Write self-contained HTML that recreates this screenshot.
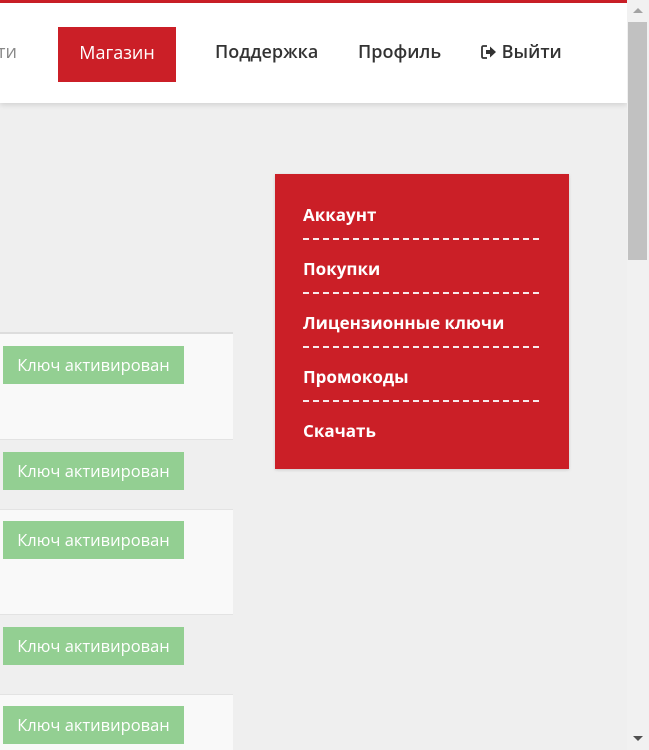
<!DOCTYPE html>
<html><head><meta charset="utf-8"><style>
*{margin:0;padding:0;box-sizing:border-box}
body{width:649px;height:750px;overflow:hidden;background:#efefef;font-family:"Open Sans","Liberation Sans","DejaVu Sans",sans-serif;position:relative}
.topbar{position:absolute;left:0;top:0;width:627px;height:3px;background:#cb1f27}
.header{position:absolute;left:0;top:3px;width:627px;height:100px;background:#fff;box-shadow:0 2px 5px rgba(0,0,0,.12)}
.nav{position:absolute;top:40px;font-size:18px;font-weight:600;color:#333;white-space:nowrap}
.shop{position:absolute;left:58px;top:27px;width:118px;height:55px;background:#cb1f27;color:#fff;font-size:18px;text-align:center;line-height:53px}
.menu{position:absolute;left:275px;top:174px;width:294px;height:295px;background:#cb1f27;box-shadow:0 1px 3px rgba(0,0,0,.15)}
.mi{position:absolute;left:28px;color:#fff;font-size:17px;font-weight:bold}
.dash{position:absolute;left:28px;width:240px;height:2px;background:repeating-linear-gradient(90deg,rgba(255,255,255,.9) 0 6px,transparent 6px 10px)}
.row{position:absolute;left:0;width:233px}
.btn{position:absolute;left:3px;width:181px;height:38px;background:#93cf92;color:#fff;font-size:16.5px;text-align:center;line-height:37px}
.sb{position:absolute;left:627px;top:0;width:22px;height:750px;background:#f1f1f1}
.thumb{position:absolute;left:628px;top:22px;width:19px;height:238px;background:#c1c1c1}
</style></head><body>
<div class="topbar"></div>
<div class="header"></div>
<div class="nav" style="left:-3px;color:#888;font-weight:normal">ти</div>
<div class="shop">Магазин</div>
<div class="nav" style="left:215px">Поддержка</div>
<div class="nav" style="left:358px">Профиль</div>
<div class="nav" style="left:481px"><svg width="16" height="14" viewBox="0 0 16 14" style="vertical-align:-1px"><path d="M6 1H2.5Q1 1 1 2.5v9Q1 13 2.5 13H6" fill="none" stroke="#333" stroke-width="1.8"/><path d="M5 5h4V1.5L15 7l-6 5.5V9H5z" fill="#333"/></svg> Выйти</div>

<div class="menu">
<div class="mi" style="top:29px">Аккаунт</div>
<div class="dash" style="top:64px"></div>
<div class="mi" style="top:83px">Покупки</div>
<div class="dash" style="top:118px"></div>
<div class="mi" style="top:137px">Лицензионные ключи</div>
<div class="dash" style="top:172px"></div>
<div class="mi" style="top:191px">Промокоды</div>
<div class="dash" style="top:226px"></div>
<div class="mi" style="top:245px">Скачать</div>
</div>

<div class="row" style="top:332px;height:108px;background:#f9f9f9;border-top:2px solid #ddd;border-bottom:1px solid #e3e3e3"></div>
<div class="row" style="top:509px;height:106px;background:#f9f9f9;border-top:1px solid #e3e3e3;border-bottom:1px solid #e3e3e3"></div>
<div class="row" style="top:694px;height:56px;background:#f9f9f9;border-top:1px solid #e3e3e3"></div>
<div class="btn" style="top:346px">Ключ активирован</div>
<div class="btn" style="top:452px">Ключ активирован</div>
<div class="btn" style="top:521px">Ключ активирован</div>
<div class="btn" style="top:627px">Ключ активирован</div>
<div class="btn" style="top:706px">Ключ активирован</div>

<div class="sb"></div>
<div class="thumb"></div>
<div style="position:absolute;left:633px;top:8px;width:0;height:0;border-left:5px solid transparent;border-right:5px solid transparent;border-bottom:5px solid #a3a3a3"></div>
<div style="position:absolute;left:633px;top:736px;width:0;height:0;border-left:5px solid transparent;border-right:5px solid transparent;border-top:5px solid #505050"></div>
</body></html>
